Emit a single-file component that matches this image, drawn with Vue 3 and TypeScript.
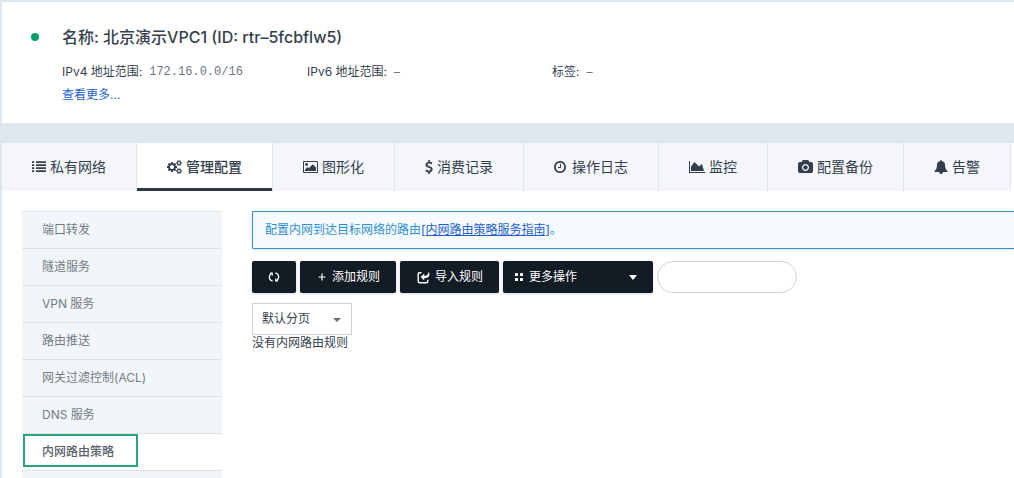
<script setup lang="ts">
import { ref } from 'vue'

interface Tab {
  label: string
  box: string
  width: number
  path: string
}

const gear =
  'M832 896q0-106-75-181t-181-75-181 75-75 181 75 181 181 75 181-75 75-181zm768 512q0-52-38-90t-90-38-90 38-38 90q0 53 37.5 90.5t90.5 37.5 90.5-37.5 37.5-90.5zm0-1024q0-52-38-90t-90-38-90 38-38 90q0 53 37.5 90.5t90.5 37.5 90.5-37.5 37.5-90.5zm-384 421v185q0 10-7 19.5t-16 10.5l-155 24q-11 35-32 76 34 48 90 115 7 11 7 20 0 12-7 19-23 30-82.5 89.5t-78.5 59.5q-11 0-21-7l-115-90q-37 19-77 31-11 108-23 155-7 24-30 24h-186q-11 0-20-7.5t-10-17.5l-23-153q-34-10-75-31l-118 89q-7 7-20 7-11 0-21-8-144-133-144-160 0-9 7-19 10-14 41-53t47-61q-23-44-35-82l-152-24q-10-1-17-9.5t-7-19.5v-185q0-10 7-19.5t16-10.5l155-24q11-35 32-76-34-48-90-115-7-11-7-20 0-12 7-20 22-30 82-89t79-59q11 0 21 7l115 90q34-18 77-32 11-108 23-154 7-24 30-24h186q11 0 20 7.5t10 17.5l23 153q34 10 75 31l118-89q8-7 20-7 11 0 21 8 144 133 144 160 0 8-7 19-12 16-42 54t-45 60q23 48 34 82l152 23q10 2 17 10.5t7 19.5zm640 533v140q0 16-149 31-12 27-30 52 51 113 51 138 0 4-4 7-122 71-124 71-8 0-46-47t-52-68q-20 2-30 2t-30-2q-14 21-52 68t-46 47q-2 0-124-71-4-3-4-7 0-25 51-138-18-25-30-52-149-15-149-31v-140q0-16 149-31 13-29 30-52-51-113-51-138 0-4 4-7 4-2 35-20t59-34 30-16q8 0 46 46.5t52 67.5q20-2 30-2t30 2q51-71 92-112l6-2q4 0 124 70 4 3 4 7 0 25-51 138 17 23 30 52 149 15 149 31zm0-1024v140q0 16-149 31-12 27-30 52 51 113 51 138 0 4-4 7-122 71-124 71-8 0-46-47t-52-68q-20 2-30 2t-30-2q-14 21-52 68t-46 47q-2 0-124-71-4-3-4-7 0-25 51-138-18-25-30-52-149-15-149-31v-140q0-16 149-31 13-29 30-52-51-113-51-138 0-4 4-7 4-2 35-20t59-34 30-16q8 0 46 46.5t52 67.5q20-2 30-2t30 2q51-71 92-112l6-2q4 0 124 70 4 3 4 7 0 25-51 138 17 23 30 52 149 15 149 31z'

const tabs: Tab[] = [
  {
    label: '私有网络', box: '0 0 14 14', width: 14,
    path: 'M0 1.200h2.200v1.800H0zM0 4.200h2.200v1.800H0zM0 7.200h2.200v1.800H0zM0 10.200h2.200v1.800H0zM4 1.200h10v1.800H4zM4 4.200h10v1.800H4zM4 7.200h10v1.800H4zM4 10.200h10v1.800H4z',
  },
  { label: '管理配置', box: '-64 0 1920 1792', width: 15, path: gear },
  {
    label: '图形化', box: '-64 0 1920 1792', width: 15,
    path: 'M576 576q0 80-56 136t-136 56-136-56-56-136 56-136 136-56 136 56 56 136zm1024 384v448h-1408v-192l320-320 160 160 512-512zm96-704h-1600q-13 0-22.5 9.5t-9.5 22.5v1216q0 13 9.5 22.5t22.5 9.5h1600q13 0 22.5-9.5t9.5-22.5v-1216q0-13-9.5-22.5t-22.5-9.5zm160 32v1216q0 66-47 113t-113 47h-1600q-66 0-113-47t-47-113v-1216q0-66 47-113t113-47h1600q66 0 113 47t47 113z',
  },
  {
    label: '消费记录', box: '384 0 1024 1792', width: 8,
    path: 'M1362 1185q0 153-99.5 263.5t-258.5 136.5v175q0 14-9 23t-23 9h-135q-13 0-22.5-9.5t-9.5-22.5v-175q-66-9-127.5-31t-101.5-44.5-74-48-46.5-37.5-17.5-18q-17-21-2-41l103-135q7-10 23-12 15-2 24 9l2 2q113 99 243 125 37 8 74 8 81 0 142.5-43t61.5-122q0-28-15-53t-33.5-42-58.5-37.5-66-32-80-32.5q-39-16-61.5-25t-61.5-26.5-62.5-31-56.5-35.5-53.5-42.5-43.5-49-35.5-58-21-66.5-8.5-78q0-138 98-242t255-134v-180q0-13 9.5-22.5t22.5-9.5h135q14 0 23 9t9 23v176q57 6 110.5 23t87 33.5 63.5 37.5 39 29 15 14q17 18 5 38l-81 146q-8 15-23 16-14 3-27-7-3-3-14.5-12t-39-26.5-58.5-32-74.5-26-85.5-11.5q-95 0-155 43t-60 111q0 26 8.5 48t29.5 41.5 39.5 33 56 31 60.5 27 70 27.5q53 20 81 31.5t76 35 75.5 42.5 62 50 53 63.5 31.5 76.5 13 94z',
  },
  {
    label: '操作日志', box: '128 0 1792 1792', width: 14,
    path: 'M1024 544v448q0 14-9 23t-23 9h-320q-14 0-23-9t-9-23v-64q0-14 9-23t23-9h224v-352q0-14 9-23t23-9h64q14 0 23 9t9 23zm416 352q0-148-73-273t-198-198-273-73-273 73-198 198-73 273 73 273 198 198 273 73 273-73 198-198 73-273zm224 0q0 209-103 385.5t-279.5 279.5-385.5 103-385.5-103-279.5-279.5-103-385.5 103-385.5 279.5-279.5 385.5-103 385.5 103 279.5 279.5 103 385.5z',
  },
  {
    label: '监控', box: '0 0 2048 1792', width: 16,
    path: 'M2048 1536v128h-2048v-1536h128v1408h1920zm-384-1024l256 896h-1664v-576l448-576 576 576z',
  },
  {
    label: '配置备份', box: '0 0 1920 1792', width: 15,
    path: 'M960 672q119 0 203.5 84.5t84.5 203.5-84.5 203.5-203.5 84.5-203.5-84.5-84.5-203.5 84.5-203.5 203.5-84.5zm704-416q106 0 181 75t75 181v896q0 106-75 181t-181 75h-1408q-106 0-181-75t-75-181v-896q0-106 75-181t181-75h224l51-136q19-49 69.5-84.5t103.5-35.5h512q53 0 103.5 35.5t69.5 84.5l51 136h224zm-704 1152q185 0 316.5-131.5t131.5-316.5-131.5-316.5-316.5-131.5-316.5 131.5-131.5 316.5 131.5 316.5 316.5 131.5z',
  },
  {
    label: '告警', box: '0 0 1792 1792', width: 14,
    path: 'M912 1696q0-16-16-16-59 0-101.5-42.5t-42.5-101.5q0-16-16-16t-16 16q0 73 51.5 124.5t124.5 51.5q16 0 16-16zm816-288q0 52-38 90t-90 38h-448q0 106-75 181t-181 75-181-75-75-181h-448q-52 0-90-38t-38-90q50-42 91-88t85-119.5 74.5-158.5 50-206 19.5-260q0-152 117-282.5t307-158.5q-8-19-8-39 0-40 28-68t68-28 68 28 28 68q0 20-8 39 190 28 307 158.5t117 282.5q0 139 19.5 260t50 206 74.5 158.5 85 119.5 91 88z',
  },
]

const menu: string[] = ['端口转发', '隧道服务', 'VPN 服务', '路由推送', '网关过滤控制(ACL)', 'DNS 服务', '内网路由策略']

const activeTab = ref('管理配置')
const activeMenu = ref('内网路由策略')
const keyword = ref('')
const paging = ref('默认分页')
</script>

<template>
  <div class="page">
    <header class="summary">
      <span class="status"></span>
      <div class="info">
        <h1>名称: 北京演示VPC1 (ID: rtr–5fcbflw5)</h1>
        <dl>
          <div><dt>IPv4 地址范围:</dt><dd class="mono">172.16.0.0/16</dd></div>
          <div><dt>IPv6 地址范围:</dt><dd>–</dd></div>
          <div><dt>标签:</dt><dd>–</dd></div>
        </dl>
        <a class="more" href="#more">查看更多...</a>
      </div>
    </header>

    <main class="panel">
      <nav class="tabs">
        <button
          v-for="tab in tabs"
          :key="tab.label"
          type="button"
          :class="{ active: tab.label === activeTab }"
          @click="activeTab = tab.label"
        >
          <svg :viewBox="tab.box" :width="tab.width" height="14" aria-hidden="true"><path :d="tab.path" /></svg>
          <span>{{ tab.label }}</span>
        </button>
      </nav>

      <div class="body">
        <nav class="side">
          <a
            v-for="item in menu"
            :key="item"
            href="#menu"
            :class="{ active: item === activeMenu }"
            @click.prevent="activeMenu = item"
          >{{ item }}</a>
          <div class="rest"></div>
        </nav>

        <section class="content">
          <p class="notice">配置内网到达目标网络的路由<a href="#guide">[内网路由策略服务指南]</a>。</p>

          <div class="toolbar">
            <button type="button" class="refresh" aria-label="刷新">
              <svg width="12" height="12" viewBox="0 0 12 12" fill="none" stroke="currentColor" stroke-width="1.3">
                <path d="M4.600 10.200C2.600 9.600 1.200 7.800 1.400 5.500C1.600 4 2.400 3 3.600 2.300M7.400 1.800C9.400 2.400 10.800 4.200 10.600 6.500C10.400 8 9.600 9 8.400 9.700" />
                <path d="M2 2.200h2.200v2.200M10 9.800H7.800V7.600" />
              </svg>
            </button>
            <button type="button" class="add">
              <svg width="8" height="8" viewBox="0 0 8 8" stroke="currentColor" stroke-width="1.2"><path d="M4 .5v7M.5 4h7" /></svg>
              <span>添加规则</span>
            </button>
            <button type="button" class="import">
              <svg width="13" height="13" viewBox="0 0 13 13" fill="none" stroke="currentColor">
                <path stroke-width="1.400" d="M4.600 1.700H2.700Q1.200 1.700 1.200 3.200v7Q1.200 11.700 2.700 11.700h6.600Q10.800 11.700 10.800 10.200V8.800" />
                <path fill="currentColor" stroke="none" d="M3.600 6L7.200 2.600v2.200c2.600 0 4.200-1 4.300-4.300C13.600 3.800 12.300 7.200 7.200 7.200v2.200z" />
              </svg>
              <span>导入规则</span>
            </button>
            <button type="button" class="actions">
              <svg width="8" height="8" viewBox="0 0 8 8" fill="currentColor">
                <rect width="3" height="3" rx=".6" /><rect x="5" width="3" height="3" rx=".6" />
                <rect y="5" width="3" height="3" rx=".6" /><rect x="5" y="5" width="3" height="3" rx=".6" />
              </svg>
              <span>更多操作</span>
              <svg class="caret" width="8" height="5" viewBox="0 0 8 5" fill="currentColor"><path d="M0 0h8L4 5z" /></svg>
            </button>
            <input v-model="keyword" type="text" aria-label="搜索" />
          </div>

          <div class="paging">
            <select v-model="paging" aria-label="分页">
              <option>默认分页</option>
            </select>
            <svg width="8" height="4" viewBox="0 0 8 4" aria-hidden="true"><path d="M0 0h8L4 4z" /></svg>
          </div>
          <p class="empty">没有内网路由规则</p>
        </section>
      </div>
    </main>
  </div>
</template>

<style>
body {
  background: #dfe7ee;
}
</style>

<style scoped>
* {
  box-sizing: border-box;
}
.page {
  min-height: 100vh;
  padding: 2px 0 0 2px;
  display: flex;
  flex-direction: column;
  gap: 20px;
  background: #dfe7ee;
  color: #343f4d;
  font: 12px/20px Inter, "Noto Sans CJK SC", sans-serif;
}
.summary {
  display: flex;
  gap: 23px;
  padding: 24px 0 18px 29px;
  background: #fff;
}
.status {
  flex: none;
  width: 8px;
  height: 8px;
  margin-top: 7px;
  border-radius: 50%;
  background: #06a069;
}
.info {
  flex: 1;
}
h1 {
  margin: 0 0 14px;
  font-size: 16px;
  font-weight: 500;
  line-height: 22px;
}
dl {
  display: flex;
  margin: 0;
}
dl div {
  display: flex;
  gap: 7px;
  width: 245px;
}
dd {
  margin: 0;
  color: #6e7680;
}
.mono {
  font-family: "Liberation Mono", monospace;
}
.more {
  display: block;
  width: fit-content;
  margin-top: 3px;
  color: #1f62c9;
  text-decoration: none;
}
.panel {
  flex: 1;
  display: flex;
  flex-direction: column;
  background: #fff;
}
.tabs {
  display: flex;
  height: 48px;
}
.tabs button {
  flex: none;
  display: flex;
  align-items: center;
  gap: 4px;
  padding: 0 30px;
  border: 0;
  border-right: 1px solid #dfe5ec;
  background: #f4f6fb;
  color: #343f4d;
  font: inherit;
  font-size: 14px;
}
.tabs button.active {
  background: #fff;
  box-shadow: inset 0 -3px #2c394a;
  font-weight: 500;
}
.tabs svg {
  fill: currentColor;
}
.body {
  flex: 1;
  display: flex;
  gap: 30px;
  padding: 20px 0 0 20px;
}
.side {
  flex: none;
  display: flex;
  flex-direction: column;
  width: 200px;
}
.side a,
.rest {
  border-top: 1px solid #dbe2e9;
  background: #f2f6f9;
}
.side a {
  position: relative;
  padding: 8px 20px;
  color: #737c86;
  text-decoration: none;
}
.side .active {
  background: #fff;
  color: #58616c;
  font-weight: 500;
}
.side .active::after {
  content: "";
  position: absolute;
  inset: 0 84px 3px 1px;
  border: 2px solid #2da37c;
}
.rest {
  flex: 1;
}
.content {
  flex: 1;
  min-width: 0;
}
p {
  margin: 0;
}
.notice {
  padding: 8px 12px;
  border: 1px solid #3b8cc4;
  border-right: 0;
  border-radius: 2px 0 0 2px;
  background: #f5fbff;
  box-shadow: 0 1px 3px #d5e9f5;
  color: #2f8fd0;
}
.notice a {
  color: #1f5fc9;
}
.toolbar {
  display: flex;
  gap: 4px;
  margin: 12px 0 10px;
}
.toolbar button {
  display: flex;
  align-items: center;
  justify-content: center;
  gap: 6px;
  height: 32px;
  padding: 0 16px;
  border: 0;
  border-radius: 2px;
  background: #131b24;
  box-shadow: 0 1px 3px #d5dde5;
  color: #fff;
  font: inherit;
}
.toolbar .add {
  padding: 0 16px 0 18px;
}
.toolbar .import {
  gap: 5px;
  padding: 0 16px 0 17px;
}
.toolbar .actions {
  width: 150px;
  padding: 0 16px 0 12px;
}
.caret {
  margin-left: auto;
}
.toolbar input {
  width: 140px;
  height: 32px;
  padding: 0 16px;
  border: 1px solid #cfd6d9;
  border-radius: 16px;
  background: #fff;
  font: inherit;
}
.paging {
  position: relative;
  width: 100px;
}
.paging select {
  display: block;
  width: 100%;
  height: 32px;
  padding: 0 9px;
  appearance: none;
  border: 1px solid #cdd3da;
  border-radius: 0;
  background: #fff;
  color: #343f4d;
  font: inherit;
}
.paging svg {
  position: absolute;
  right: 11px;
  top: 15px;
  fill: #68717b;
  pointer-events: none;
}
.empty {
  line-height: 16px;
}
</style>
